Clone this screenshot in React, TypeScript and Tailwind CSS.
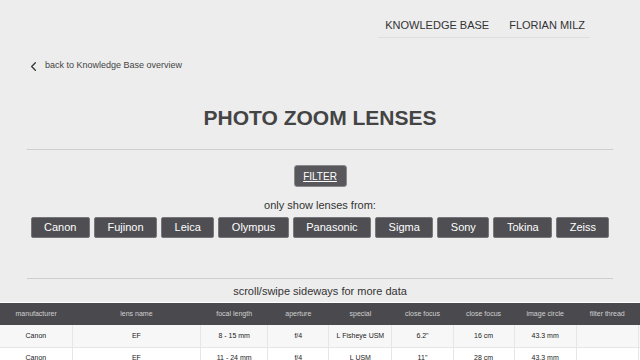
import { ChevronLeft } from "lucide-react";

const brands = ["Canon", "Fujinon", "Leica", "Olympus", "Panasonic", "Sigma", "Sony", "Tokina", "Zeiss"];

const columns = [
  { label: "manufacturer", w: "w-[71px]" },
  { label: "lens name", w: "w-[126px]" },
  { label: "focal length", w: "w-[66px]" },
  { label: "aperture", w: "w-[60px]" },
  { label: "special", w: "w-[62px]" },
  { label: "close focus", w: "w-[60px]" },
  { label: "close focus", w: "w-[60px]" },
  { label: "image circle", w: "w-[61px]" },
  { label: "filter thread", w: "w-[61px]" },
  { label: "", w: "w-[60px]" },
];

const rows = [
  ["Canon", "EF", "8 - 15 mm", "f/4", "L Fisheye USM", "6.2\"", "16 cm", "43.3 mm", "", ""],
  ["Canon", "EF", "11 - 24 mm", "f/4", "L USM", "11\"", "28 cm", "43.3 mm", "", ""],
];

export default function App() {
  return (
    <div className="w-[640px] h-[360px] overflow-hidden bg-[#ededed] font-['Liberation_Sans',Arial,sans-serif] text-[#333]">
      {/* top nav */}
      <div className="flex justify-end pr-[50px]">
        <div className="flex gap-[20px] pl-[7px] pr-[5px] pt-[18px] pb-[5px] border-b border-[#dedede] text-[11px] leading-[14px] text-[#333]">
          <span>KNOWLEDGE BASE</span>
          <span>FLORIAN MILZ</span>
        </div>
      </div>

      {/* back link */}
      <div className="mt-[21px] flex items-center h-[14px] pl-[26px] text-[9px] text-[#444]">
        <ChevronLeft className="w-[15px] h-[15px] text-[#333]" strokeWidth={2} />
        <span className="ml-[4px]">back to Knowledge Base overview</span>
      </div>

      <h1 className="mt-[33px] text-center text-[21px] leading-[24px] font-bold text-[#444]">PHOTO ZOOM LENSES</h1>

      <div className="mt-[19px] mx-[27px] border-t border-[#cfcfcf]" />

      <div className="mt-[15px] flex justify-center">
        <button className="w-[53px] h-[22px] rounded-[3px] bg-[#58585c] border border-[#8a8a8e] text-white text-[10px] underline">
          FILTER
        </button>
      </div>

      <p className="mt-[11px] text-center text-[11px] leading-[14px] text-[#333]">only show lenses from:</p>

      <div className="mt-[5px] flex justify-center gap-[4px]">
        {brands.map((b) => (
          <button
            key={b}
            className="h-[21px] px-[12.5px] rounded-[2px] bg-[#4e4e53] border border-[#77777b] text-white text-[11px]"
          >
            {b}
          </button>
        ))}
      </div>

      <div className="mt-[40px] mx-[27px] border-t border-[#cfcfcf]" />

      <p className="mt-[5px] text-center text-[11px] leading-[14px] text-[#333]">scroll/swipe sideways for more data</p>

      <div className="mt-[4px] border-t border-white overflow-hidden">
        <table className="table-fixed border-collapse w-[700px] text-[7px]">
          <thead>
            <tr className="bg-[#4a4a4e] h-[22px]">
              {columns.map((c, i) => (
                <th key={i} className={`${c.w} font-normal text-[#d0d0d0]`}>
                  {c.label}
                </th>
              ))}
            </tr>
          </thead>
          <tbody>
            {rows.map((r, ri) => (
              <tr key={ri} className={ri % 2 === 0 ? "bg-[#f7f7f7] h-[22px]" : "bg-white h-[22px]"}>
                {r.map((cell, ci) => (
                  <td key={ci} className="text-center text-[#222] border-r border-b border-[#e6e6e6]">
                    {cell}
                  </td>
                ))}
              </tr>
            ))}
          </tbody>
        </table>
      </div>
    </div>
  );
}
